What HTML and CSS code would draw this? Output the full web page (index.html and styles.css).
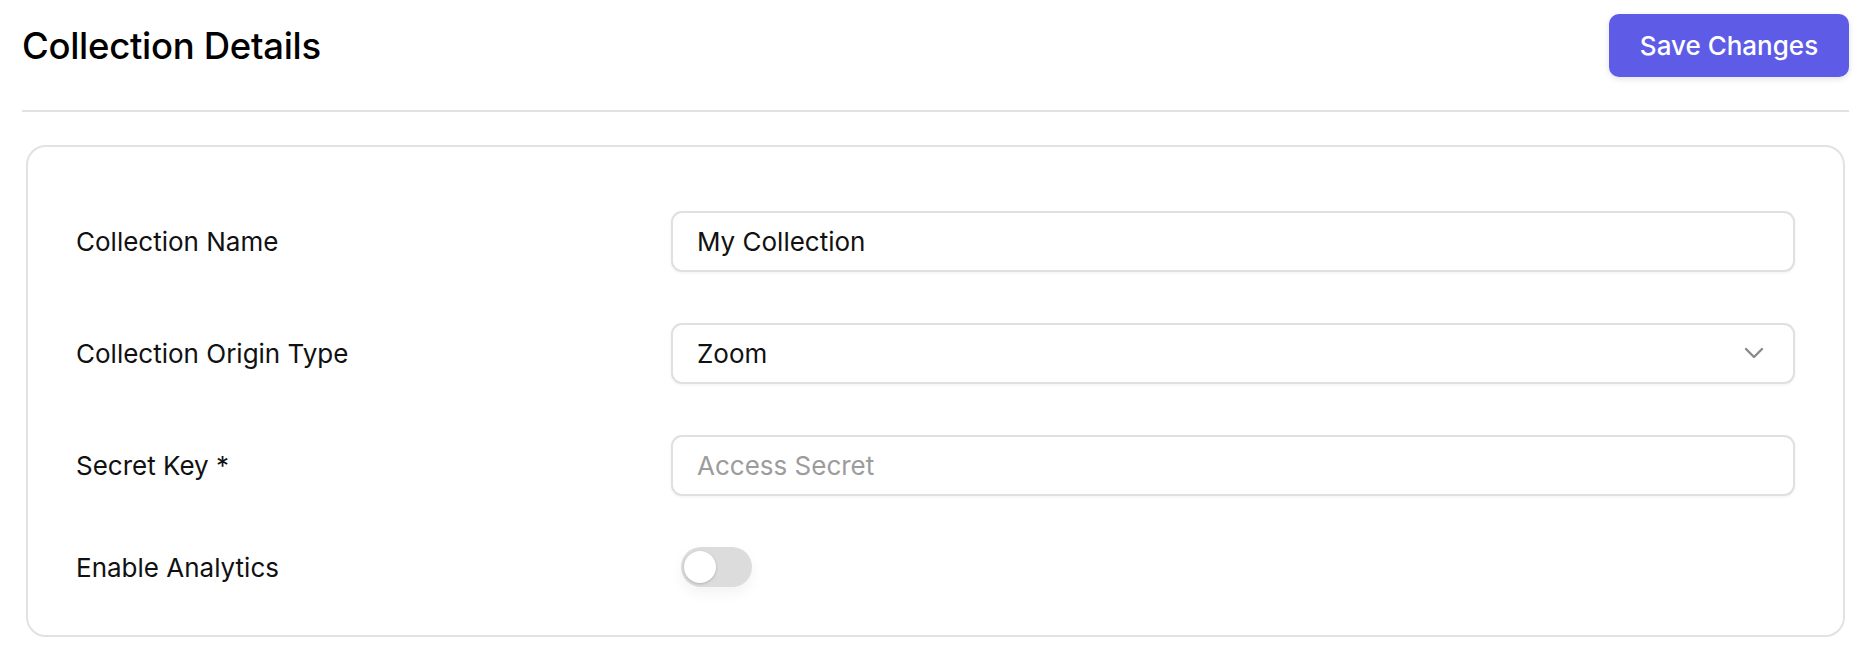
FILE: index.html
```html
<!DOCTYPE html>
<html lang="en">

<head>
    <meta charset="UTF-8">
    <meta name="viewport" content="width=device-width, initial-scale=1.0">
    <title>Collection Details</title>
    <link rel="stylesheet" href="styles.css">
</head>

<body>
    <header class="page-header">
        <h1>Collection Details</h1>
        <button type="button" class="save-button">Save Changes</button>
    </header>

    <main>
        <!-- collection settings -->
        <form class="settings-card" onsubmit="return false">
            <label class="field-label" for="collection-name">Collection Name</label>
            <input class="field-input" type="text" id="collection-name" value="My Collection">

            <label class="field-label" for="origin-type">Collection Origin Type</label>
            <div class="select-wrap">
                <select class="field-input" id="origin-type">
                    <option>Zoom</option>
                    <option>Google Meet</option>
                    <option>Microsoft Teams</option>
                </select>
                <svg class="chevron" width="20" height="12" viewBox="0 0 20 12">
                    <path d="M2 2 L10 10 L18 2" fill="none" stroke="#8a8a8a" stroke-width="2.4" stroke-linecap="round" stroke-linejoin="round"/>
                </svg>
            </div>

            <label class="field-label" for="secret-key">Secret Key *</label>
            <input class="field-input" type="password" id="secret-key" placeholder="Access Secret">

            <span class="field-label">Enable Analytics</span>
            <label class="toggle">
                <input type="checkbox" id="analytics">
                <span class="toggle-track"></span>
            </label>
        </form>
    </main>
</body>

</html>
```

FILE: styles.css
```css
/* base */
body {
    font-family: Inter, "Noto Sans", sans-serif;
    background-color: #fff;
    color: #111;
    margin: 0;
    padding: 14px 15px 0 22px;
}

.page-header {
    display: flex;
    justify-content: space-between;
    align-items: center;
    padding-bottom: 33px;
    border-bottom: 2px solid #e2e2e2;
}

h1 {
    margin: 0;
    font-size: 36.5px;
    font-weight: 500;
    color: #000;
    letter-spacing: -0.3px;
}

.save-button {
    width: 240px;
    height: 63px;
    background-color: #5e5ce6;
    color: #fff;
    border: none;
    border-radius: 10px;
    font-family: Inter, sans-serif;
    font-size: 26px;
    font-weight: 500;
    box-shadow: 0 2px 6px rgba(0, 0, 0, 0.12);
    cursor: pointer;
}

main {
    padding: 33px 4px 0 4px;
}

/* card */
.settings-card {
    display: grid;
    grid-template-columns: 1fr 2fr;
    column-gap: 33px;
    row-gap: 51px;
    align-items: center;
    border: 2px solid #e2e2e2;
    border-radius: 20px;
    padding: 64px 48px 48px 48px;
}

.field-label {
    font-family: Inter, "Noto Sans", sans-serif;
    font-size: 26px;
    color: #111;
}

.field-input {
    box-sizing: border-box;
    width: 100%;
    height: 61px;
    padding: 0 24px;
    border: 2px solid #e0e0e0;
    border-radius: 11px;
    background-color: #fff;
    font-family: Inter, sans-serif;
    font-size: 26px;
    color: #111;
    box-shadow: 0 1px 3px rgba(0, 0, 0, 0.06);
    outline: none;
}

.field-input::placeholder {
    color: #9c9c9c;
}

select.field-input {
    appearance: none;
    -webkit-appearance: none;
}

.select-wrap {
    position: relative;
}

.chevron {
    position: absolute;
    right: 31px;
    top: 24px;
    pointer-events: none;
}

/* toggle */
.toggle {
    position: relative;
    display: block;
    width: 71px;
    height: 40px;
    margin-left: 10px;
}

.toggle input {
    display: none;
}

.toggle-track {
    position: absolute;
    inset: 0;
    background-color: #dcdcdc;
    border-radius: 20px;
    box-shadow: 0 6px 14px rgba(0, 0, 0, 0.05);
}

.toggle-track::before {
    content: "";
    position: absolute;
    left: 3px;
    top: 4px;
    width: 32px;
    height: 32px;
    border-radius: 50%;
    background-color: #fff;
    box-shadow: 0 1px 3px rgba(0, 0, 0, 0.2);
}

.toggle input:checked + .toggle-track {
    background-color: #5e5ce6;
}

.toggle input:checked + .toggle-track::before {
    left: 36px;
}
```
